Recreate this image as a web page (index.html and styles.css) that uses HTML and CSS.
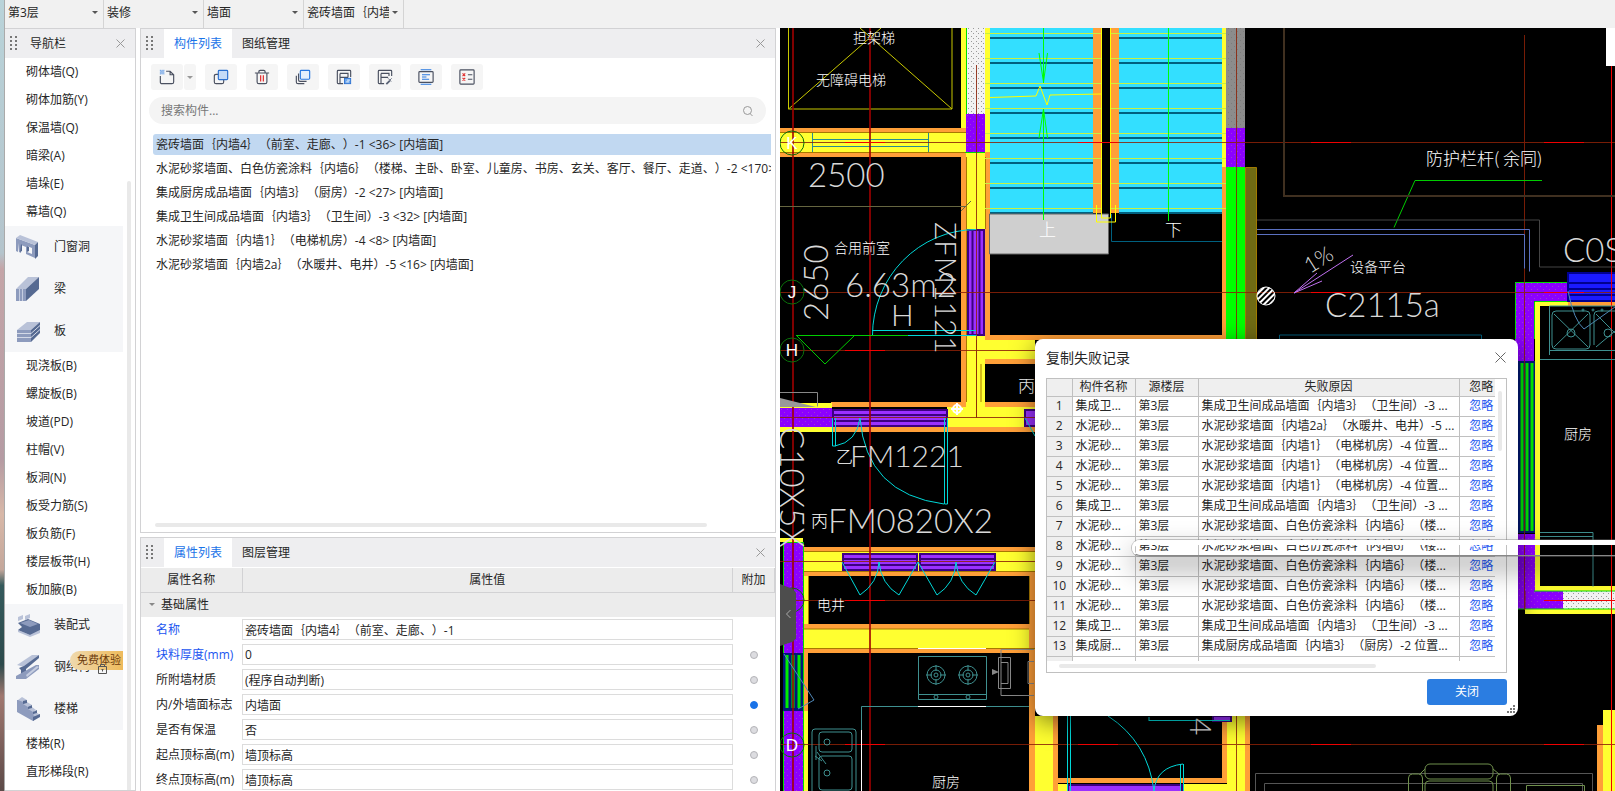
FILE: index.html
```html
<!DOCTYPE html>
<html lang="zh-CN">
<head>
<meta charset="UTF-8" />
<meta name="viewport" content="width=device-width, initial-scale=1.0" />
<title>构件列表</title>
<link rel="stylesheet" href="styles.css">
</head>
<body>

<div class="desktop-edge"></div>

<div class="app">
  <div class="topbar">
    <div class="combo"><select aria-label="楼层"><option>第3层</option></select></div>
    <div class="combo"><select aria-label="构件大类"><option>装修</option></select></div>
    <div class="combo"><select aria-label="构件类型"><option>墙面</option></select></div>
    <div class="combo"><select aria-label="构件"><option>瓷砖墙面｛内墙4｝（前室、走廊、）-1</option></select></div>
  </div>

  <div class="workspace">
    <nav class="panel nav">
      <div class="panel-head">
        <span class="grip"></span>
        <span class="nav-title">导航栏</span>
        <button class="close" aria-label="关闭导航栏"><svg width="9" height="9"><path d="M0.5 0.5l8 8M8.5 0.5l-8 8"/></svg></button>
      </div>
      <div class="nav-body">
        <div class="nav-list">
          <a href="#">砌体墙(Q)</a>
          <a href="#">砌体加筋(Y)</a>
          <a href="#">保温墙(Q)</a>
          <a href="#">暗梁(A)</a>
          <a href="#">墙垛(E)</a>
          <a href="#">幕墙(Q)</a>
          <a href="#" class="group">
            <svg width="24" height="26" viewBox="0 0 24 26"><path fill="#8d9bbd" d="M0 4l19 7v13l-9-4v-7l-5-2v8l-2-1v-9l-1 9-2-1z"/><path fill="#b9c2d8" d="M0 4l4-3 18 7-3 3z"/><path fill="#566a92" d="M19 11l3-3v14l-3 3z"/><path fill="#f5f6f8" d="M11 12l5 2v6l-5-2z"/><path fill="#566a92" d="M5 10l-1 8 2-1v-6zM11 12l2 1v4l-2 1z"/></svg>
            门窗洞
          </a>
          <a href="#" class="group">
            <svg width="24" height="26" viewBox="0 0 24 26"><path fill="#b9c2d8" d="M0 13L12 1h11L10 13z"/><path fill="#566a92" d="M10 13L23 1v12L10 25z"/><path fill="#8d9bbd" d="M0 13h10v12H0z"/><path stroke="#c5cde0" d="M3.500 13v12M6.500 13v12"/></svg>
            梁
          </a>
          <a href="#" class="group">
            <svg width="24" height="26" viewBox="0 0 24 26"><path fill="#b9c2d8" d="M1 12L11 4h13l-9 8z"/><path fill="#566a92" d="M15 12l9-8v11l-9 9z"/><path fill="#8d9bbd" d="M1 12h14v12H1z"/><path stroke="#d3d9e7" fill="none" d="M1 15.500h14l9-8M1 19.500h14l9-8"/></svg>
            板
          </a>
          <a href="#">现浇板(B)</a>
          <a href="#">螺旋板(B)</a>
          <a href="#">坡道(PD)</a>
          <a href="#">柱帽(V)</a>
          <a href="#">板洞(N)</a>
          <a href="#">板受力筋(S)</a>
          <a href="#">板负筋(F)</a>
          <a href="#">楼层板带(H)</a>
          <a href="#">板加腋(B)</a>
          <a href="#" class="group">
            <svg width="24" height="26" viewBox="0 0 24 26"><path fill="#b9c2d8" d="M2 5l5-2v4l-5 2zM9 4l5-2v4l-5 2zM2 18l12 5 10-5v3l-10 4-12-5z"/><path fill="#566a92" d="M2 11l10-4 12 5v6l-10 5-12-5 4-3z"/><path fill="#8d9bbd" d="M4 11l9-3 9 4-8 3z"/></svg>
            装配式
          </a>
          <a href="#" class="group">
            <svg width="24" height="26" viewBox="0 0 24 26"><path fill="#b9c2d8" d="M1 11L16 1h7L8 13z"/><path fill="#566a92" d="M3 14l5-2L23 1v3L10 15v8H5v-7z"/><path fill="#8d9bbd" d="M0 22l20-11h3v4L10 25H0z"/><path fill="#c5cde0" d="M10 21l11-9 2 1-12 10z"/></svg>
            钢结构
            <span class="badge">免费体验</span>
            <svg class="lock" width="10" height="10" viewBox="0 0 10 10"><path d="M0.500 2.500h8v7h-8zM2.500 2.500v-2h4v2M3.500 5.500h2M4.500 5.500v2" fill="none" stroke="#555"/></svg>
          </a>
          <a href="#" class="group">
            <svg width="24" height="26" viewBox="0 0 24 26"><path fill="#8d9bbd" d="M1 4v12l16 9 7-6-6-2v-3l-4-1v-4l-4-1V4z"/><path fill="#b9c2d8" d="M2 4l4-3 5 3-4 2zM7 8l4-2 5 3-4 2zM12 13l4-2 4 3-3 2zM17 19l3-3 4 3-4 2z"/><path fill="#566a92" d="M7 5l4-1v3l-4 1zM12 11l4-2v3l-4 1zM17 16l4-2v3l-4 1zM17 21l7-3v3l-7 4z"/></svg>
            楼梯
          </a>
          <a href="#">楼梯(R)</a>
          <a href="#">直形梯段(R)</a>
        </div>
        <div class="nav-scroll"></div>
      </div>
    </nav>

    <div class="center">
      <section class="panel components">
        <div class="panel-head">
          <span class="grip"></span>
          <button class="tab active">构件列表</button>
          <button class="tab">图纸管理</button>
          <button class="close" aria-label="关闭构件列表"><svg width="9" height="9"><path d="M0.500 0.500l8 8M8.500 0.500l-8 8"/></svg></button>
        </div>
        <div class="tools">
          <div class="split">
            <button aria-label="新建"><svg viewBox="0 0 18 18"><path class="ink" d="M8 2.500h4.500l4 4v8q0 2-2 2h-11q-2 0-2-2V8M12.500 2.500v4h4"/><path stroke="#2878e0" stroke-width="1" stroke-dasharray="1 1" d="M1 1.500h5M2 2.500h4M1 3.500h5M2 4.500h4M1 5.500h5"/></svg></button>
            <button class="drop" aria-label="新建选项"></button>
          </div>
          <button aria-label="复制"><svg viewBox="0 0 18 18"><path class="ink" d="M6 6H3.500q-2 0-2 2v6.500q0 2 2 2H10q2 0 2-2V12"/><rect x="6" y="1.500" width="10.500" height="10.500" rx="1" fill="#c5dbf7" stroke="#2b70cf" stroke-width="1.300"/></svg></button>
          <button aria-label="删除"><svg viewBox="0 0 18 18"><path class="ink" d="M1 4.500h16M5.500 4.500v-1.500q0-1.500 1.500-1.500h4q1.500 0 1.500 1.500v1.500M3.500 5v9.500q0 2 2 2h7q2 0 2-2V5"/><path stroke="#e02626" stroke-width="1.300" d="M7.500 7v7M10.500 7v7"/></svg></button>
          <button aria-label="层间复制"><svg viewBox="0 0 18 18"><path class="ink" d="M4 5v7.500q0 1.500 1.500 1.500H13M1.500 7.500v7q0 2 2 2h7"/><rect x="6" y="1.500" width="10.500" height="10" rx="1" fill="#e3effd" stroke="#2878e0" stroke-width="1.300"/></svg></button>
          <button aria-label="存档"><svg viewBox="0 0 18 18"><path class="ink" d="M8 16.500H2.500q-1 0-1-1v-13q0-1 1-1h13q1 0 1 1V9M4.500 16V5M4.500 9.500h9M4.500 5h9v4.500"/><rect x="9.500" y="10.500" width="7" height="6" fill="#6aa5ec" stroke="#2b70cf"/><path stroke="#fff" d="M11.500 14.500h3M12.500 12.500h3"/></svg></button>
          <button aria-label="提取"><svg viewBox="0 0 18 18"><path class="ink" d="M8 16.500H2.500q-1 0-1-1v-13q0-1 1-1h13q1 0 1 1V8M4.500 16V5M4.500 9.500h8M4.500 5h9v3"/><path stroke="#596275" stroke-width="2" d="M10.500 17l4-4"/><path stroke="#596275" d="M12.500 10.500l3.500 3.500M14.500 12.500l2-2"/></svg></button>
          <button aria-label="列表"><svg viewBox="0 0 18 18"><rect class="ink" x="1" y="3" width="16" height="12" rx="1"/><path stroke="#2878e0" stroke-width="1.300" d="M3 .800h12M3 17.200h12M4.500 6.500h9M4.500 9h5M4.500 11.500h8"/></svg></button>
          <button aria-label="检查"><svg viewBox="0 0 18 18"><rect class="ink" x="1" y="1" width="16" height="16" rx="1"/><path class="ink" d="M10 6.500h5M10 11.500h5"/><path stroke="#e02626" stroke-width="1.200" d="M4 5l3 3M7 5L4 8M4 10l3 3M7 10l-3 3"/></svg></button>
        </div>
        <div class="search">
          <input type="text" placeholder="搜索构件..." aria-label="搜索构件">
          <svg width="12" height="12" viewBox="0 0 12 12"><circle cx="5.500" cy="5.500" r="4" /><path d="M8 8.500l2.500 2.500"/></svg>
        </div>
        <ul class="list">
          <li class="selected">瓷砖墙面｛内墙4｝（前室、走廊、）-1 &lt;36&gt; [内墙面]</li>
          <li>水泥砂浆墙面、白色仿瓷涂料｛内墙6｝（楼梯、主卧、卧室、儿童房、书房、玄关、客厅、餐厅、走道、）-2 &lt;170&gt; [内墙面]</li>
          <li>集成厨房成品墙面｛内墙3｝（厨房）-2 &lt;27&gt; [内墙面]</li>
          <li>集成卫生间成品墙面｛内墙3｝（卫生间）-3 &lt;32&gt; [内墙面]</li>
          <li>水泥砂浆墙面｛内墙1｝（电梯机房）-4 &lt;8&gt; [内墙面]</li>
          <li>水泥砂浆墙面｛内墙2a｝（水暖井、电井）-5 &lt;16&gt; [内墙面]</li>
        </ul>
        <div class="list-scroll"></div>
      </section>

      <section class="panel props">
        <div class="panel-head">
          <span class="grip"></span>
          <button class="tab active">属性列表</button>
          <button class="tab">图层管理</button>
          <button class="close" aria-label="关闭属性列表"><svg width="9" height="9"><path d="M0.500 0.500l8 8M8.500 0.500l-8 8"/></svg></button>
        </div>
        <table class="prop-table">
          <thead>
            <tr><th class="c-name">属性名称</th><th>属性值</th><th class="c-extra">附加</th></tr>
          </thead>
          <tbody>
            <tr class="prop-group"><td colspan="3">基础属性</td></tr>
            <tr><td class="blue"><label for="p1">名称</label></td><td><input type="text" id="p1" value="瓷砖墙面｛内墙4｝（前室、走廊、）-1"></td><td></td></tr>
            <tr><td class="blue"><label for="p2">块料厚度(mm)</label></td><td><input type="text" id="p2" value="0"></td><td><input type="checkbox" aria-label="附加 块料厚度"></td></tr>
            <tr><td><label for="p3">所附墙材质</label></td><td><input type="text" id="p3" value="(程序自动判断)"></td><td><input type="checkbox" aria-label="附加 所附墙材质"></td></tr>
            <tr><td><label for="p4">内/外墙面标志</label></td><td><input type="text" id="p4" value="内墙面"></td><td><input type="checkbox" checked aria-label="附加 内/外墙面标志"></td></tr>
            <tr><td><label for="p5">是否有保温</label></td><td><input type="text" id="p5" value="否"></td><td><input type="checkbox" aria-label="附加 是否有保温"></td></tr>
            <tr><td><label for="p6">起点顶标高(m)</label></td><td><input type="text" id="p6" value="墙顶标高"></td><td><input type="checkbox" aria-label="附加 起点顶标高"></td></tr>
            <tr><td><label for="p7">终点顶标高(m)</label></td><td><input type="text" id="p7" value="墙顶标高"></td><td><input type="checkbox" aria-label="附加 终点顶标高"></td></tr>
          </tbody>
        </table>
      </section>
    </div>

    <main class="canvas">
      <svg class="plan" viewBox="780 28 835 763" preserveAspectRatio="xMinYMin slice">
        <defs>
          <pattern id="dots" width="5" height="5" patternUnits="userSpaceOnUse"><rect width="5" height="5" fill="#f2f2f2"/><path fill="#999" d="M1 1h1v1h-1zM3 3h1v1h-1z"/></pattern>
          <pattern id="purple" width="6" height="6" patternUnits="userSpaceOnUse"><rect width="6" height="6" fill="#8c00ff"/><path fill="#9c38d8" d="M1 1h1v1h-1zM4 4h1v1h-1z"/></pattern>
          <pattern id="grey" width="6" height="6" patternUnits="userSpaceOnUse"><rect width="6" height="6" fill="#8c8c8c"/><path fill="#7c7c7c" d="M1 1h1v1h-1zM4 4h1v1h-1z"/></pattern>
          <pattern id="hatch" width="4" height="4" patternUnits="userSpaceOnUse" patternTransform="rotate(45)"><rect width="2" height="4" fill="#fff"/></pattern>
        </defs>
        <rect x="780" y="28" width="835" height="763" fill="#000"/>

        <!-- lift shaft -->
        <path class="ln yel" d="M788.500 28V109H952V28M788.500 109L881 28M952 109L860 28"/>

        <!-- walls: orange render, yellow body -->
        <g class="or">
          <path d="M780 128h186v5H780zM780 152h186v5H780zM961 157h5v260h-5zM985 152h5v206h-5zM1093 28h8v185h-8zM1111 28h8v185h-8z"/>
          <path d="M985 335h50v5h-50zM990 335h232v5H990zM976 359h59v5h-59zM976 359h5v48h-5zM831 402h204v5H831zM831 427h204v5H831z"/>
          <path d="M803 547h232v5H803zM803 571h232v5H803zM803 624h232v5H803zM803 648h232v5H803zM1029 571h6v220h-6zM803 653h5v58h-5z"/>
          <path d="M1222 167h4v172h-4zM1568 302h47v4h-47zM1053 716h5v75h-5zM1043 778h184v5h-184zM1222 716h5v67h-5zM1245 716h5v75h-5zM1597 725h6v66h-6z"/>
        </g>
        <g class="ye">
          <path d="M780 133h186v19H780zM961 28h5v100h-5zM985 28h5v124h-5zM966 152h19v255h-19zM976 340h59v19h-59zM947 407h88v20h-88z"/>
          <path d="M780 403h52v5H780zM780 427h52v5H780zM803 552h232v19H803zM803 576h5v48h-5zM803 629h226v19H803zM780 538h23v4H780zM803 711h5v80h-5z"/>
          <path d="M1222 28h4v139h-4zM1534 302h34v4h-34zM1535 306h5v285h-5zM1540 586h75v5h-75zM1525 609h90v5h-90zM1035 716h18v75h-18zM1227 716h18v75h-18zM1058 784h170v7h-170zM1603 710h12v81h-12z"/>
        </g>
        <path stroke="#a87800" fill="none" d="M780 132.500h186M780 152.500h186M966.500 157v245M985.500 157v72M981 364v38M976.500 340v78M803 551.500h232M803 571.500h232M803 629h226M803 648.500h232M808.500 576v48M1029.500 576v48"/>
        <path fill="url(#dots)" d="M966 28h19v86h-19zM1563 591h52v18h-52z"/>
        <path fill="url(#grey)" d="M1226 28h19v100h-19z"/>
        <path fill="url(#purple)" d="M966 114h19v38h-19zM780 408h52v19H780zM783 542h20v111H783zM783 711h20v80H783zM1226 128h19v39h-19zM1515 282h53v19h-53zM1515 301h19v60h-19zM1515 534h20v75h-20zM1525 591h38v18h-38z"/>
        <path fill="#0f0" d="M1226 167h19v172h-19z"/>
        <path fill="#6f6b14" stroke="#a07a00" d="M1245.500 167.500h11v172h-11z"/>
        <path stroke="#0d0" fill="none" d="M966.500 114V28M965 152.500h20M783.500 791V542.500h20V791M1515.500 339V282.500h53M1534.500 339v-37.500h34M1534 591h81M1515 609h100"/>

        <!-- windows and doors -->
        <g fill="#9b30ff" stroke="#3d0080" stroke-width="2">
          <path d="M968 230h16v105h-16zM833 410h114v16H833zM1025 410h12v16h-12zM843 554h74v16h-74zM920 554h75v16h-75zM1068 785h114v8h-114zM1213 716h18v5h-18z"/>
          <path d="M972.500 230v105M979.500 230v105M833 415h114M833 421h114M843 559h74M843 565h74M920 559h75M920 565h75"/>
        </g>
        <path fill="#001878" d="M783 653h20v58h-20zM1518 361h17v172h-17z"/>
        <path stroke="#0e0" stroke-width="3" d="M787 655v53M793 655v53M799 655v53M1522 363v168M1527 363v168M1532 363v168"/>
        <path fill="#1a1aff" stroke="#000090" stroke-width="2" d="M1568 273h50v28h-50zM1568 283h47M1568 289h47M1568 295h47"/>
        <path class="ln" stroke="#2a8a90" d="M812.500 133v19M928.500 133v19M812 139.500h116M812 146.500h116"/>

        <!-- stairs -->
        <path fill="#33dfff" d="M990 28h103v185H990zM1119 28h103v185h-103z"/>
        <path stroke="#00607f" stroke-width="2" d="M990 38h103M990 63h103M990 88h103M990 113h103M990 138h103M990 163h103M990 188h103M1119 38h103M1119 63h103M1119 88h103M1119 113h103M1119 138h103M1119 163h103M1119 188h103M990 213h103M1119 213h103"/>
        <path stroke="#c8f040" d="M985 33.500h116M985 58.500h116M985 83.500h116M985 108.500h116M985 133.500h116M985 158.500h116M985 183.500h116M985 208.500h116M1111 33.500h115M1111 58.500h115M1111 83.500h115M1111 108.500h115M1111 133.500h115M1111 158.500h115M1111 183.500h115M1111 208.500h115"/>
        <path fill="#cfcfcf" stroke="#666" d="M989.500 214h119v40h-119z"/>
        <path stroke="#00607f" fill="none" d="M1111.500 214v27.500H1222M1279.500 339v-4h202v4"/>
        <path class="ln" stroke="#ff0" d="M1101.500 28v190h9V28M1096.500 205v17h19v-17M990 97.500l46-1.500 4-10 7 19 3-10 51-1"/>
        <path class="ln" stroke="#0f0" d="M1043.500 28v55M1043.500 109v111M1168.500 28v193M1039 53l4.500 29 4-29M1039 138l4.500-29 4 29"/>

        <!-- axis grid -->
        <path stroke="#a00000" stroke-width="2" opacity="0.800" d="M793 28v763M870 28v763"/>
        <path stroke="#8c2208" opacity="0.850" d="M780 142.500h835M780 292.500h835M780 350.500h255M780 417.500h255M780 561.500h255M780 600.500h255M780 744.500h835M976.500 65v353M1236.500 28v311M1524.500 35v575M1525 591v18M1236.500 716v75"/>
        <path stroke="#f00000" d="M1611.500 66v725M845 142.500h40M845 350.500h40M845 600.500h40M845 744.500h40M1078 142.500h40M1311 142.500h40M1544 142.500h40M1311 292.500h40M1544 292.500h40M1544 600.500h71M1078 744.500h40M1311 744.500h40M1544 744.500h40"/>

        <!-- door swings -->
        <g class="ln" stroke="#00d8d8">
          <path d="M976 229.500A104 106 0 0 0 872.500 335.500M872 330.500h104M872.500 335.500h104"/>
          <path d="M832.500 418v28h3v-28M835 446q22-4 25-28M860 418q6 76 84 86M944.500 418v86h3v-86M1025 418l10 18"/>
          <path d="M842 562l18 33q18-12 19-33M879 562q2 22 20 33l19-33M918 562l19 33q18-12 19-33M956 562q2 22 20 33l19-33"/>
          <path d="M1067.500 716v75M1070.500 716v75M1108 716q40 26 46 75M1154 791q2-24 29-27M1180.500 764v27M1183.500 764v27M1149 720.500h81M1149 717v4"/>
        </g>
        <path class="ln" stroke="#5088b8" d="M784 654l30 46-16 9M1568 291q6 30 16 38l31-22"/>
        <path class="ln" stroke="#0c0" d="M796 335.500h112M797 336l28 28 29-28M1542 180.500h-127l-21 47"/>
        <path fill="#999" d="M780 398l36 9h-36z"/>
        <path class="ln" stroke="#888" d="M780 392.500h37.500v14"/>
        <path class="ln" stroke="#666640" d="M780 206.500h186M961 211l10-10"/>

        <!-- site lines -->
        <path fill="none" stroke="#403020" stroke-width="2" d="M1284 28v168h331"/>
        <path class="ln" stroke="#444" d="M1257 220h282.500v47h76"/>
        <path class="ln" stroke="#5a70c0" d="M1257 229.500h272.500v42M1257 234.500h267.500v34"/>
        <path class="ln" stroke="#c070f0" d="M1353 255l-59 38 23-20M1294 293l28-12"/>
        <circle cx="1266" cy="296" r="9" fill="url(#hatch)" stroke="#fff"/>

        <!-- kitchen fittings -->
        <g class="ln" stroke="#3f9090">
          <path d="M918.500 656.500h68v43h-68zM918 694.500h68M861.500 730v-23.500H1029"/>
          <circle cx="936" cy="675" r="9"/><circle cx="936" cy="675" r="5"/><circle cx="936" cy="675" r="2"/>
          <circle cx="968" cy="675" r="9"/><circle cx="968" cy="675" r="5"/><circle cx="968" cy="675" r="2"/>
          <path d="M926 675h6M940 675h6M936 665v6M936 679v6M958 675h6M972 675h6M968 665v6M968 679v6"/>
          <circle cx="936" cy="697" r="2"/><circle cx="968" cy="697" r="2"/>
          <rect x="812" y="729" width="44" height="70" rx="3"/><rect x="819" y="732" width="33" height="20" rx="3"/><rect x="819" y="756" width="33" height="34" rx="3"/>
          <circle cx="827" cy="742" r="3"/><circle cx="827" cy="773" r="3"/><path d="M815 756l7 5M817 752l9 12M816 746v14"/>
          <path d="M1549.500 355v-49H1615M1549 350.500h66M1552 345v-30q0-4 4-4h30q4 0 4 4v30q0 4-4 4h-30q-4 0-4-4zM1594 345v-30q0-4 4-4h20M1554 314l34 33M1554 347l34-33M1596 314l19 19M1596 347l19-16"/>
          <circle cx="1571" cy="333" r="4"/><circle cx="1608" cy="333" r="4"/><circle cx="1583" cy="310" r="1"/><circle cx="1593" cy="310" r="1"/><circle cx="1602" cy="310" r="1"/>
          <path d="M1540 532.500h53v54M1540 536.500h53M1540 359.500h75"/>
        </g>
        <path stroke="#fff" d="M918 648.500h68M918 706.500h68M861.500 730v61"/>
        <path class="ln" stroke="#888" d="M1034 649.500h-33v46h33M998.500 657.500h12v31h-12zM1001 662.500h7v21h-7M1034 661.500h-6v22h6"/>
        <path fill="#888" d="M992 669l7 3-7 3z"/>

        <!-- living room -->
        <path class="ln" stroke="#555" d="M1255.500 791v-17.500h337V791M1264.500 791v-7.500h318V791"/>
        <g class="ln" stroke="#6f8f4c">
          <rect x="1425" y="764" width="68" height="15" rx="5"/><rect x="1425" y="781" width="68" height="20" rx="4"/>
          <path d="M1408.500 791v-13q0-4 4-4h6q4 0 4 4v13M1496.500 791v-13q0-4 4-4h6q4 0 4 4v13M1526.500 791v-5.500h58V791M1425 769l-5 5M1493 769l6 5"/>
        </g>

        <!-- axis bubbles -->
        <g class="ln" stroke="#0a700a"><circle cx="792" cy="143" r="12"/><circle cx="792" cy="292" r="12"/><circle cx="792" cy="350" r="12"/><circle cx="792" cy="600" r="12"/><circle cx="792" cy="745" r="12"/></g>
        <g class="axis"><text x="792" y="149">K</text><text x="792" y="298">J</text><text x="792" y="356">H</text><text x="792" y="751">D</text></g>
        <g stroke="#fff" stroke-width="2" fill="none"><circle cx="957" cy="409" r="4"/><path d="M951 409h12M957 403v12"/></g>

        <!-- labels -->
        <g class="note">
          <text x="853" y="43">担架梯</text>
          <text x="816" y="85">无障碍电梯</text>
          <text x="834" y="253">合用前室</text>
          <text x="817" y="610">电井</text>
          <text x="932" y="787">厨房</text>
          <text x="1564" y="439">厨房</text>
          <text x="1350" y="272">设备平台</text>
        </g>
        <g class="note big">
          <text x="1018" y="392">丙</text>
          <text x="811" y="527">丙</text>
          <text x="836" y="463">乙</text>
          <text x="1039" y="236">上</text>
          <text x="1165" y="236">下</text>
          <text x="1426" y="165">防护栏杆( 余同)</text>
        </g>
        <g class="cad">
          <text x="808" y="187">2500</text>
          <text x="845" y="297">6.63m2</text>
          <text x="1325" y="317">C2115a</text>
          <text x="1563" y="262">C0S</text>
          <text x="828" y="533">FM0820X2</text>
          <text transform="translate(828 321) rotate(-90)">2650</text>
          <text transform="translate(780 427) rotate(90)">C10X5X</text>
        </g>
        <g class="cad small">
          <text x="850" y="467">FM1221</text>
          <text x="891" y="326">H</text>
          <text transform="translate(935 222) rotate(90)">ZFM1121</text>
          <text transform="translate(1190 718) rotate(90)">4</text>
        </g>
        <text class="cad tiny" transform="translate(1310 274) rotate(-32)">1%</text>
      </svg>

      <div class="corner-patch"></div>
      <button class="collapse" aria-label="收起"><svg width="6" height="10"><path d="M5.500 1l-4 4 4 4"/></svg></button>

      <div class="dialog" role="dialog" aria-label="复制失败记录">
        <div class="dialog-head">
          <span>复制失败记录</span>
          <button class="close" aria-label="关闭窗口"><svg width="11" height="11"><path d="M0.500 0.500l10 10M10.500 0.500l-10 10"/></svg></button>
        </div>
        <div class="record-frame">
          <div class="record-view">
            <table class="records">
              <thead>
                <tr><th class="r-no"></th><th class="r-name">构件名称</th><th class="r-floor">源楼层</th><th class="r-why">失败原因</th><th class="r-act">忽略</th></tr>
              </thead>
              <tbody>
                <tr><th>1</th><td>集成卫...</td><td>第3层</td><td>集成卫生间成品墙面｛内墙3｝（卫生间）-3 ...</td><td><a href="#">忽略</a></td></tr>
                <tr><th>2</th><td>水泥砂...</td><td>第3层</td><td>水泥砂浆墙面｛内墙2a｝（水暖井、电井）-5 ...</td><td><a href="#">忽略</a></td></tr>
                <tr><th>3</th><td>水泥砂...</td><td>第3层</td><td>水泥砂浆墙面｛内墙1｝（电梯机房）-4 位置...</td><td><a href="#">忽略</a></td></tr>
                <tr><th>4</th><td>水泥砂...</td><td>第3层</td><td>水泥砂浆墙面｛内墙1｝（电梯机房）-4 位置...</td><td><a href="#">忽略</a></td></tr>
                <tr><th>5</th><td>水泥砂...</td><td>第3层</td><td>水泥砂浆墙面｛内墙1｝（电梯机房）-4 位置...</td><td><a href="#">忽略</a></td></tr>
                <tr><th>6</th><td>集成卫...</td><td>第3层</td><td>集成卫生间成品墙面｛内墙3｝（卫生间）-3 ...</td><td><a href="#">忽略</a></td></tr>
                <tr><th>7</th><td>水泥砂...</td><td>第3层</td><td>水泥砂浆墙面、白色仿瓷涂料｛内墙6｝（楼...</td><td><a href="#">忽略</a></td></tr>
                <tr><th>8</th><td>水泥砂...</td><td>第3层</td><td>水泥砂浆墙面、白色仿瓷涂料｛内墙6｝（楼...</td><td><a href="#">忽略</a></td></tr>
                <tr><th>9</th><td>水泥砂...</td><td>第3层</td><td>水泥砂浆墙面、白色仿瓷涂料｛内墙6｝（楼...</td><td><a href="#">忽略</a></td></tr>
                <tr><th>10</th><td>水泥砂...</td><td>第3层</td><td>水泥砂浆墙面、白色仿瓷涂料｛内墙6｝（楼...</td><td><a href="#">忽略</a></td></tr>
                <tr><th>11</th><td>水泥砂...</td><td>第3层</td><td>水泥砂浆墙面、白色仿瓷涂料｛内墙6｝（楼...</td><td><a href="#">忽略</a></td></tr>
                <tr><th>12</th><td>集成卫...</td><td>第3层</td><td>集成卫生间成品墙面｛内墙3｝（卫生间）-3 ...</td><td><a href="#">忽略</a></td></tr>
                <tr><th>13</th><td>集成厨...</td><td>第3层</td><td>集成厨房成品墙面｛内墙3｝（厨房）-2 位置...</td><td><a href="#">忽略</a></td></tr>
                <tr><th></th><td></td><td></td><td></td><td></td></tr>
              </tbody>
            </table>
            <div class="v-thumb"></div>
          </div>
          <div class="h-thumb"></div>
        </div>
        <div class="dialog-foot"><button class="primary">关闭</button></div>
        <svg class="resize" width="9" height="9"><path d="M6 0h2v2h-2zM3 3h2v2h-2zM6 3h2v2h-2zM0 6h2v2h-2zM3 6h2v2h-2zM6 6h2v2h-2z"/></svg>
      </div>
      <div class="under-window"></div>
    </main>
  </div>
</div>

</body>
</html>
```

FILE: styles.css
```css
:root {
  --line: #d2d2d4;
  --head: #eeeef0;
  --text: #262626;
  --link: #1a55f0;
  --accent: #1a73e8;
}

* {
  box-sizing: border-box;
}

body {
  margin: 0;
  height: 100vh;
  display: flex;
  overflow: hidden;
  background: #fff;
  color: var(--text);
  font-family: "Open Sans", "Noto Sans CJK SC", sans-serif;
  font-size: 12px;
  line-height: 18px;
  text-spacing-trim: space-all;
}

button, input, select {
  font: inherit;
  color: inherit;
  border: none;
  background: none;
  padding: 0;
  margin: 0;
}

a {
  color: inherit;
  text-decoration: none;
}

.desktop-edge {
  width: 5px;
  flex: none;
  background: linear-gradient(#b9d3d9, #b4c4cc 32%, #c4a5a8 34%, #b59ba3 58%, #d8b8a8 65%, #c4a79b 72%, #355a5c 74%, #2c4a4c 84%, #a07870 88%, #5c4a48);
  border-right: 1px solid #aaa;
}

.app {
  flex: 1;
  min-width: 0;
  display: flex;
  flex-direction: column;
}

/* top bar */
.topbar {
  display: flex;
  height: 28px;
  flex: none;
  background: #f1f1f1;
}

.combo {
  position: relative;
  width: 100px;
  border-right: 1px solid #d4d4d4;
}

.combo:first-child {
  width: 99px;
}

.combo select {
  appearance: none;
  width: 100%;
  height: 25px;
  padding: 0 14px 0 3px;
  overflow: hidden;
}

.combo::after,
.drop::after {
  content: "";
  position: absolute;
  right: 5px;
  top: 11px;
  border: 3px solid transparent;
  border-top-color: #555;
  border-bottom: none;
}

.workspace {
  flex: 1;
  min-height: 0;
  display: flex;
  gap: 4px;
}

/* panels */
.panel {
  border: 1px solid var(--line);
  background: #fff;
  overflow: hidden;
}

.panel-head {
  display: flex;
  align-items: center;
  height: 29px;
  background: var(--head);
}

.grip {
  width: 7px;
  height: 15px;
  margin: 0 11px 0 5px;
  background: radial-gradient(circle at 1px 1px, #777 1px, transparent 1px) 0 0 / 5px 4px;
}

.close {
  display: flex;
  margin-left: auto;
  margin-right: 10px;
}

.close svg {
  fill: none;
  stroke: #999;
}

.nav {
  width: 131px;
  flex: none;
  border-left: none;
  display: flex;
  flex-direction: column;
}

.nav-title {
  margin-left: 2px;
}

.nav-body {
  flex: 1;
  min-height: 0;
  display: flex;
  gap: 4px;
}

.nav-list {
  width: 118px;
}

.nav-list a {
  display: flex;
  align-items: center;
  height: 28px;
  padding-left: 21px;
}

.nav-list .group {
  position: relative;
  height: 42px;
  padding-left: 11px;
  gap: 14px;
  background: #f5f6f8;
}

.badge {
  position: absolute;
  right: 0;
  top: 5px;
  height: 19px;
  padding: 0 2px 0 7px;
  border-radius: 10px 0 0 10px;
  background: linear-gradient(90deg, #efd9ae, #eebb5c);
  color: #6b3a0c;
  font-size: 11px;
}

.lock {
  position: absolute;
  right: 15px;
  top: 18px;
}

.nav-scroll {
  width: 4px;
  margin-top: 123px;
  border-radius: 2px 2px 0 0;
  background: #e9e9e9;
}

.center {
  width: 636px;
  flex: none;
  display: flex;
  flex-direction: column;
  gap: 4px;
}

.tab {
  height: 29px;
  padding: 0 10px;
}

.tab.active {
  background: #fff;
  color: var(--accent);
}

.components {
  flex: 505;
  display: flex;
  flex-direction: column;
}

.tools {
  display: flex;
  gap: 9px;
  padding: 6px 10px 7px;
}

.tools button {
  width: 32px;
  height: 26px;
  border-radius: 3px;
  background: #f5f5f5;
  display: flex;
  align-items: center;
  justify-content: center;
}

.tools svg {
  width: 16px;
  height: 16px;
  fill: none;
}

.ink {
  stroke: #4a5060;
  stroke-width: 1.3;
  fill: none;
}

.split {
  display: flex;
  gap: 1px;
}

.tools .drop {
  position: relative;
  width: 12px;
}

.drop::after {
  right: 3px;
  top: 12px;
  border-top-color: #999;
}

.search {
  display: flex;
  align-items: center;
  height: 27px;
  margin: 0 9px 10px 8px;
  padding: 0 12px;
  border-radius: 14px;
  background: #f4f4f4;
}

.search input {
  flex: 1;
  outline: none;
}

.search input::placeholder {
  color: #777;
}

.search svg {
  fill: none;
  stroke: #999;
}

.list {
  list-style: none;
  margin: 0 4px 0 12px;
  padding: 0;
  display: flex;
  flex-direction: column;
  gap: 3px;
}

.list li {
  height: 21px;
  padding-left: 3px;
  line-height: 21px;
  border-radius: 3px 0 0 3px;
  white-space: nowrap;
  overflow: hidden;
}

.list .selected {
  background: #c1d8f1;
}

.list-scroll {
  width: 552px;
  height: 4px;
  margin: auto 0 5px 14px;
  border-radius: 2px;
  background: #e9e9e9;
}

/* properties */
.props {
  flex: 254;
  border-bottom: none;
}

.prop-table {
  width: 100%;
  margin-top: 1px;
  border-collapse: collapse;
  table-layout: fixed;
}

.prop-table th {
  height: 24px;
  padding: 0;
  font-weight: normal;
  background: #ececec;
  border-right: 1px solid var(--line);
  border-bottom: 1px solid var(--line);
}

.c-name { width: 101px; }
.c-extra { width: 42px; }

.prop-table td {
  height: 25px;
  padding: 0;
  white-space: nowrap;
}

.prop-table td:first-child {
  padding-left: 15px;
}

.prop-table td:last-child {
  text-align: center;
}

.prop-table .prop-group td {
  position: relative;
  padding-left: 20px;
  text-align: left;
  background: #ececec;
}

.prop-group td::before {
  content: "";
  position: absolute;
  left: 8px;
  top: 10px;
  border: 3px solid transparent;
  border-top-color: #888;
  border-bottom: none;
}

.blue {
  color: var(--link);
}

.prop-table input[type="text"] {
  display: block;
  width: 100%;
  height: 21px;
  padding: 0 2px;
  border: 1px solid #dcdcdc;
}

.prop-table input[type="checkbox"] {
  appearance: none;
  display: block;
  width: 8px;
  height: 8px;
  margin: 0 auto;
  border: 1px solid #b4b4b8;
  border-radius: 50%;
  background: #dcdce0;
}

.prop-table input[type="checkbox"]:checked {
  border-color: var(--accent);
  background: var(--accent);
}

/* drawing area */
.canvas {
  position: relative;
  flex: 1;
  min-width: 0;
  overflow: hidden;
  background: #000;
}

.plan {
  display: block;
  width: 100%;
  height: 100%;
}

.ln { fill: none; }
.yel { stroke: #c8c800; }
.or { fill: #ff9f38; }
.ye { fill: #ffff30; }

.axis {
  fill: #fff;
  font-family: "Liberation Sans", sans-serif;
  font-size: 17px;
  text-anchor: middle;
}

.note {
  fill: #fff;
  font-family: "Noto Sans CJK SC", sans-serif;
  font-weight: 300;
  font-size: 14px;
}

.note.big {
  font-size: 17px;
}

.cad {
  fill: #d8d8d8;
  font-family: Lato, sans-serif;
  font-weight: 300;
  font-size: 33px;
}

.cad.small {
  font-size: 30px;
}

.cad.tiny {
  font-size: 22px;
}

.corner-patch {
  position: absolute;
  right: 0;
  top: 0;
  width: 9px;
  height: 38px;
  background: #fff;
}

.collapse {
  position: absolute;
  left: 0;
  top: 556px;
  width: 16px;
  height: 62px;
  background: #4d4d4d;
  clip-path: polygon(0 0, 80% 8%, 100% 14%, 100% 88%, 80% 93%, 0 100%);
}

.collapse svg {
  fill: none;
  stroke: #aaa;
}

/* dialog */
.dialog {
  position: absolute;
  left: 255px;
  top: 311px;
  width: 483px;
  padding: 0 11px 11px;
  border-radius: 8px;
  background: #fff;
  box-shadow: 0 6px 24px rgba(0, 0, 0, 0.5);
}

.dialog-head {
  display: flex;
  align-items: center;
  height: 39px;
  padding-bottom: 2px;
  font-size: 14px;
}

.dialog-head .close {
  margin-right: 1px;
}

.dialog-head .close svg {
  stroke: #666;
}

.record-frame {
  height: 295px;
  border: 1px solid #c0c0c0;
}

.record-view {
  position: relative;
  height: 282px;
  overflow: hidden;
}

.records {
  width: 448px;
  border-collapse: collapse;
  table-layout: fixed;
}

.records th,
.records td {
  height: 20px;
  padding: 0 3px;
  border-right: 1px solid #c0c0c0;
  border-bottom: 1px solid #c0c0c0;
  white-space: nowrap;
  overflow: hidden;
}

.records th {
  padding: 0;
  font-weight: normal;
  background: #efefef;
}

.records thead th {
  height: 17px;
  line-height: 16px;
}

.records tr > :last-child {
  border-right: none;
}

.records td:last-child {
  padding: 0;
  text-align: center;
  color: var(--link);
}

.records td:last-child,
.records thead .r-act {
  padding-left: 8px;
}

.r-no { width: 25px; }
.r-name { width: 63px; }
.r-floor { width: 63px; }
.r-act { width: 36px; }

.v-thumb {
  position: absolute;
  right: 4px;
  top: 12px;
  width: 4px;
  height: 60px;
  border-radius: 2px;
  background: #e9e9e9;
}

.h-thumb {
  width: 317px;
  height: 4px;
  margin: 3px 0 0 12px;
  border-radius: 2px;
  background: #e9e9e9;
}

.dialog-foot {
  display: flex;
  justify-content: flex-end;
  margin-top: 6px;
}

.primary {
  width: 80px;
  height: 26px;
  border-radius: 3px;
  background: #2b7de1;
  color: #fff;
}

.resize {
  position: absolute;
  right: 2px;
  bottom: 2px;
  fill: #777;
}

/* edge of the window behind, still showing through */
.under-window {
  position: absolute;
  left: 352px;
  right: 0;
  top: 512px;
  height: 16px;
  border-radius: 8px 0 0 8px;
  border-top: 5px solid #fff;
  border-left: 2px solid #fff;
  border-bottom: 1px solid #888;
  box-shadow: 0 0 0 1px rgba(120, 120, 120, 0.4), 0 12px 28px rgba(0, 0, 0, 0.4);
  pointer-events: none;
}
```
